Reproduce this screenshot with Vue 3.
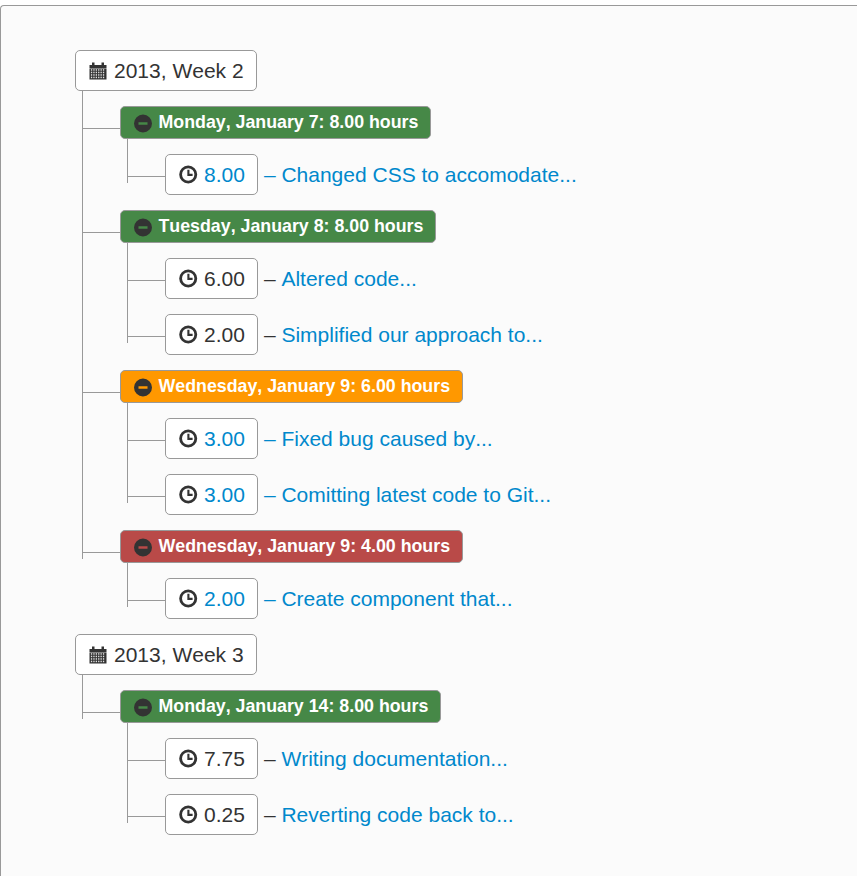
<script setup>
const weeks = [
  {
    title: '2013, Week 2',
    days: [
      { label: 'Monday, January 7: 8.00 hours', tone: 'good', entries: [
        { hours: '8.00', text: 'Changed CSS to accomodate...', linked: true }
      ] },
      { label: 'Tuesday, January 8: 8.00 hours', tone: 'good', entries: [
        { hours: '6.00', text: 'Altered code...' },
        { hours: '2.00', text: 'Simplified our approach to...' }
      ] },
      { label: 'Wednesday, January 9: 6.00 hours', tone: 'warn', entries: [
        { hours: '3.00', text: 'Fixed bug caused by...', linked: true },
        { hours: '3.00', text: 'Comitting latest code to Git...', linked: true }
      ] },
      { label: 'Wednesday, January 9: 4.00 hours', tone: 'bad', entries: [
        { hours: '2.00', text: 'Create component that...', linked: true }
      ] }
    ]
  },
  {
    title: '2013, Week 3',
    days: [
      { label: 'Monday, January 14: 8.00 hours', tone: 'good', entries: [
        { hours: '7.75', text: 'Writing documentation...' },
        { hours: '0.25', text: 'Reverting code back to...' }
      ] }
    ]
  }
]

// holes of the calendar glyph
const cells = []
for (let row = 0; row < 4; row++) {
  for (let col = 0; col < 6; col++) {
    cells.push({ x: 1.9 + col * 2.4, y: 7.2 + row * 2.5 })
  }
}
</script>

<template>
  <div class="well">
    <ul class="tree">
      <li v-for="week in weeks" :key="week.title" class="week">
        <span class="node">
          <svg class="icon" viewBox="0 0 18 18" width="18" height="18">
            <path d="M.5 3H3V.5h2.5V3h7V.5H15V3h2.5v3H.5z" fill="#333" />
            <rect x="0.5" y="6.4" width="17" height="11.1" fill="#333" />
            <rect v-for="(c, i) in cells" :key="i" :x="c.x" :y="c.y" width="1.3" height="1.5" fill="#fff" opacity="0.85" />
          </svg>
          {{ week.title }}
        </span>
        <ul>
          <li v-for="day in week.days" :key="day.label" class="branch">
            <span class="node day" :class="day.tone">
              <svg class="icon" viewBox="0 0 18 18" width="18" height="18">
                <path fill="#333" fill-rule="evenodd" d="M9 .5a9 9 0 1 1 0 18 9 9 0 0 1 0-18zM4.5 8.3v2.4h9V8.3z" />
              </svg>
              {{ day.label }}
            </span>
            <ul>
              <li v-for="entry in day.entries" :key="entry.text" class="branch">
                <div class="row">
                  <span class="node">
                    <svg class="icon" viewBox="0 0 18 18" width="18" height="18">
                      <circle cx="9.2" cy="8.5" r="7.6" fill="none" stroke="#333" stroke-width="2.8" />
                      <path d="M9.4 3.7v5.2h4.2" fill="none" stroke="#333" stroke-width="2.1" />
                    </svg>
                    <a v-if="entry.linked">{{ entry.hours }}</a>
                    <template v-else>{{ entry.hours }}</template>
                  </span>
                  <a v-if="entry.linked" class="desc">&ndash; {{ entry.text }}</a>
                  <span v-else class="desc">&ndash; <a>{{ entry.text }}</a></span>
                </div>
              </li>
            </ul>
          </li>
        </ul>
      </li>
    </ul>
  </div>
</template>

<style>
html, body {
  background: #fff;
}
</style>

<style scoped>
.well {
  margin-top: 5px;
  min-height: 871px;
  box-sizing: border-box;
  padding: 29px 0 0 74px;
  background: #fbfbfb;
  border: 1px solid #999;
  border-width: 1px 0 0 1px;
  border-radius: 4px 0 0 0;
  font-family: "Liberation Sans", Arial, sans-serif;
  font-size: 21px;
  line-height: 31px;
  font-kerning: none;
  color: #333;
}

ul {
  list-style: none;
  margin: 0;
  padding: 0;
}

li {
  position: relative;
  padding-top: 15px;
}

li ul {
  padding-left: 45px;
}

.branch::before,
.branch::after {
  content: '';
  position: absolute;
  left: -38px;
}

.branch::before {
  top: 0;
  height: 44px;
  border-left: 1px solid #999;
}

.branch:not(:last-child)::before {
  height: auto;
  bottom: 0;
}

.branch::after {
  top: 37px;
  width: 38px;
  border-top: 1px solid #999;
}

.row {
  display: flex;
  align-items: center;
}

.node {
  display: inline-flex;
  align-items: center;
  gap: 7px;
  padding: 4px 12px 4px 13px;
  background: #fff;
  border: 1px solid #999;
  border-radius: 5px;
  vertical-align: top;
}

.icon {
  flex: none;
  overflow: visible;
}

.day {
  gap: 6.5px;
  font-size: 17.8px;
  font-weight: bold;
  line-height: 23px;
  color: #fff;
}

.good {
  background: #468847;
}

.warn {
  background: #ff9800;
}

.bad {
  background: #b94a48;
}

.desc {
  margin-left: 6px;
  white-space: pre;
}

a {
  color: #0088cc;
}
</style>
